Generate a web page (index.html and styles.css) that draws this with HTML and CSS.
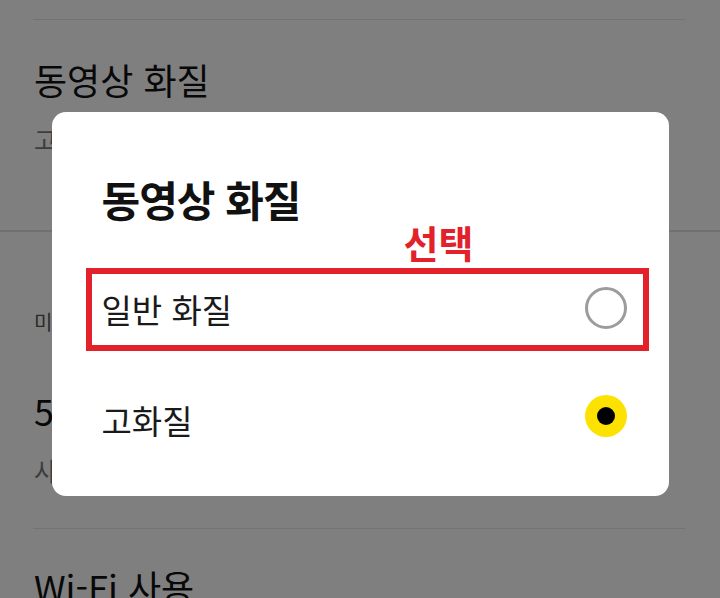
FILE: index.html
```html
<!DOCTYPE html>
<html lang="ko">
<head>
<meta charset="utf-8">
<link rel="stylesheet" href="styles.css">
</head>
<body>
<div class="page">
  <div class="divider inset"></div>
  <section class="setting first">
    <div class="setting-title">동영상 화질</div>
    <div class="setting-sub">고화질</div>
  </section>
  <div class="divider full"></div>
  <section class="setting second">
    <div class="section-header">미디어 자동 재생</div>
    <div class="setting-title gap-top">5G/LTE 사용 시 자동 재생</div>
    <div class="setting-sub">사용 안 함</div>
  </section>
  <div class="divider inset"></div>
  <section class="setting third">
    <div class="setting-title">Wi-Fi 사용</div>
  </section>
</div>

<div class="overlay">
  <div class="dialog">
    <h2 class="dialog-title">동영상 화질</h2>
    <ul class="options">
      <li class="option">
        <span class="option-label">일반 화질</span>
        <span class="radio"></span>
      </li>
      <li class="option">
        <span class="option-label lower">고화질</span>
        <span class="radio checked"><span class="dot"></span></span>
      </li>
    </ul>
    <div class="annot-label">선택</div>
    <div class="annot-box"></div>
  </div>
</div>
</body>
</html>
```

FILE: styles.css
```css
* { box-sizing: border-box; }
html, body {
  margin: 0;
  padding: 0;
  width: 720px;
  height: 598px;
  overflow: hidden;
  background: #ffffff;
  font-family: "Noto Sans CJK KR", "Noto Sans", sans-serif;
  color: #111111;
}
.page {
  width: 720px;
  display: flex;
  flex-direction: column;
}
.divider { height: 1px; background: #e6e6e6; }
.divider.inset { margin: 19px 35px 0 33px; }
.divider.full { height: 2px; background: #e0e0e0; }
.setting { padding-left: 34px; }
.setting.first { padding-top: 37px; padding-bottom: 75px; }
.setting.second { padding-top: 76px; padding-bottom: 42px; }
.setting.third { padding-top: 35px; }
.setting.second + .divider.inset { margin-top: 0; }
.setting-title {
  font-size: 36px;
  line-height: 44px;
  white-space: nowrap;
  color: #111;
}
.setting-sub {
  margin-top: 22px;
  font-size: 25px;
  line-height: 32px;
  color: #7a7a7a;
  white-space: nowrap;
}
.section-header {
  font-size: 20px;
  line-height: 28px;
  color: #555;
}
.gap-top { margin-top: 52px; }

.overlay {
  position: fixed;
  inset: 0;
  background: rgba(0, 0, 0, 0.5);
  display: flex;
  justify-content: center;
  align-items: flex-start;
  padding-top: 112px;
}
.dialog {
  position: relative;
  width: 617px;
  height: 384px;
  background: #ffffff;
  border-radius: 14px;
  padding: 61px 42px 0 50px;
}
.dialog-title {
  margin: 0;
  font-size: 42px;
  line-height: 52px;
  font-weight: 700;
  letter-spacing: -1px;
  color: #111;
}
.options {
  list-style: none;
  margin: 29px 0 0;
  padding: 0;
}
.option {
  height: 108px;
  display: flex;
  align-items: center;
  justify-content: space-between;
}
.option-label {
  font-size: 33px;
  line-height: 44px;
  color: #1a1a1a;
  padding-top: 2px;
}
.option-label.lower { padding-top: 8px; }
.radio {
  width: 42px;
  height: 42px;
  border-radius: 50%;
  border: 3px solid #9c9c9c;
  display: flex;
  align-items: center;
  justify-content: center;
}
.radio.checked {
  border: none;
  background: #fde100;
}
.dot {
  width: 18px;
  height: 18px;
  border-radius: 50%;
  background: #000;
}
.annot-label {
  position: absolute;
  left: 352px;
  top: 108px;
  font-size: 38px;
  line-height: 44px;
  font-weight: 700;
  color: #e3212b;
}
.annot-box {
  position: absolute;
  left: 34px;
  top: 156px;
  width: 563px;
  height: 83px;
  border: 6px solid #e3212b;
}
```
